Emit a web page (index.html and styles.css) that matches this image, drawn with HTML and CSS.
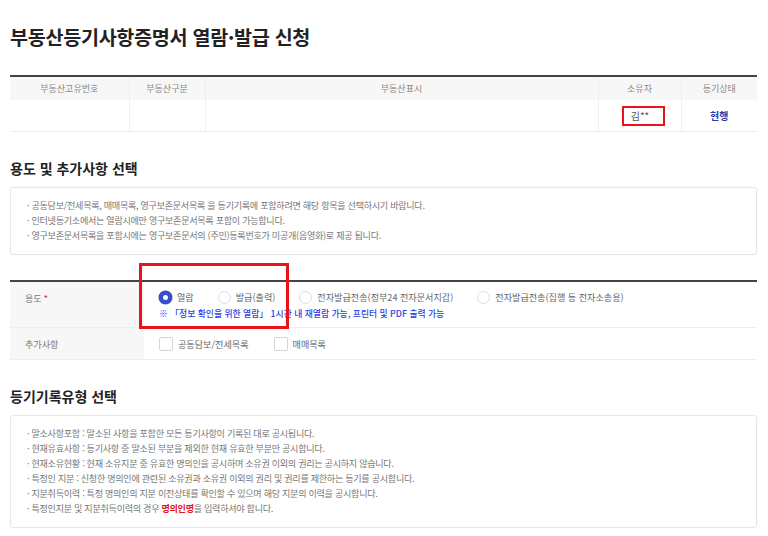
FILE: index.html
```html
<!DOCTYPE html>
<html lang="ko">
<head>
  <meta charset="UTF-8" />
  <title>부동산등기사항증명서 열람·발급 신청</title>
  <link rel="stylesheet" href="styles.css">
</head>
<body>
  <div class="page">
    <h1 class="page-title">부동산등기사항증명서 열람·발급 신청</h1>

    <table class="estate">
      <colgroup>
        <col style="width:119px"><col style="width:76px"><col style="width:393px"><col style="width:83px"><col>
      </colgroup>
      <thead>
        <tr>
          <th>부동산고유번호</th>
          <th>부동산구분</th>
          <th>부동산표시</th>
          <th>소유자</th>
          <th>등기상태</th>
        </tr>
      </thead>
      <tbody>
        <tr>
          <td></td>
          <td></td>
          <td></td>
          <td><span class="mark owner">김**</span></td>
          <td class="state">현행</td>
        </tr>
      </tbody>
    </table>

    <h2 class="sec-title">용도 및 추가사항 선택</h2>
    <div class="notice">
      <p>· 공동담보/전세목록, 매매목록, 영구보존문서목록 을 등기기록에 포함하려면 해당 항목을 선택하시기 바랍니다.</p>
      <p>· 인터넷등기소에서는 열람시에만 영구보존문서목록 포함이 가능합니다.</p>
      <p>· 영구보존문서목록을 포함시에는 영구보존문서의 (주민)등록번호가 미공개(음영화)로 제공 됩니다.</p>
    </div>

    <div class="form-wrap">
      <div class="form-table">
        <div class="row">
          <div class="label">용도 <span class="req">*</span></div>
          <div class="value">
            <div class="options">
              <label class="opt"><span class="radio on"></span>열람</label>
              <label class="opt"><span class="radio"></span>발급(출력)</label>
              <label class="opt"><span class="radio"></span>전자발급전송(정부24 전자문서지갑)</label>
              <label class="opt"><span class="radio"></span>전자발급전송(집행 등 전자소송용)</label>
            </div>
            <p class="hint">※ 「정보 확인을 위한 열람」 1시간 내 재열람 가능, 프린터 및 PDF 출력 가능</p>
          </div>
        </div>
        <div class="row">
          <div class="label">추가사항</div>
          <div class="value">
            <div class="options">
              <label class="opt check"><span class="box"></span>공동담보/전세목록</label>
              <label class="opt check"><span class="box"></span>매매목록</label>
            </div>
          </div>
        </div>
      </div>
      <div class="mark purpose"></div>
    </div>

    <h2 class="sec-title">등기기록유형 선택</h2>
    <div class="notice">
      <p>· 말소사항포함 : 말소된 사항을 포함한 모든 등기사항이 기록된 대로 공시됩니다.</p>
      <p>· 현재유효사항 : 등기사항 중 말소된 부분을 제외한 현재 유효한 부분만 공시합니다.</p>
      <p>· 현재소유현황 : 현재 소유지분 중 유효한 명의인을 공시하며 소유권 이외의 권리는 공시하지 않습니다.</p>
      <p>· 특정인 지분 : 신청한 명의인에 관련된 소유권과 소유권 이외의 권리 및 권리를 제한하는 등기를 공시합니다.</p>
      <p>· 지분취득이력 : 특정 명의인의 지분 이전상태를 확인할 수 있으며 해당 지분의 이력을 공시합니다.</p>
      <p>· 특정인지분 및 지분취득이력의 경우 <strong class="em">명의인명</strong>을 입력하셔야 합니다.</p>
    </div>
  </div>
</body>
</html>
```

FILE: styles.css
```css
body {
  margin: 0;
  background: #fff;
  color: #333;
  font-family: "Noto Sans CJK KR", "Noto Sans", sans-serif;
}
.page {
  width: 747px;
  padding: 0 0 0 10px;
}
.page-title {
  margin: 0;
  padding-top: 24px;
  height: 75px;
  box-sizing: border-box;
  font-size: 19.6px;
  line-height: 26px;
  font-weight: 700;
  color: #222;
  letter-spacing: -0.3px;
}

/* estate table */
.estate {
  width: 100%;
  table-layout: fixed;
  border-collapse: collapse;
  border-top: 2px solid #444;
  font-size: 9px;
}
.estate th {
  height: 23px;
  padding: 0;
  background: #f7f7f7;
  color: #888;
  font-weight: 400;
}
.estate td {
  height: 31px;
  padding: 0;
  text-align: center;
  border-bottom: 1px solid #eee;
  border-left: 1px solid #f0f0f0;
  font-size: 10px;
  color: #555;
}
.estate td:first-child {
  border-left: none;
}
.estate th + th {
  border-left: 1px solid #eee;
}
.estate .state {
  color: #2d3fa6;
  font-weight: 700;
}
.mark {
  border: 2px solid #e8131b;
}
.owner {
  display: inline-block;
  padding: 1px 14px 1px 7px;
  line-height: 14px;
  margin-left: 8px;
}

.sec-title {
  margin: 0;
  padding-top: 27px;
  height: 55px;
  box-sizing: border-box;
  font-size: 14px;
  line-height: 18px;
  font-weight: 700;
  color: #222;
}
.notice {
  border: 1px solid #e6e6e6;
  border-radius: 3px;
  box-shadow: 0 0 2px rgba(0, 0, 0, 0.04);
  padding: 10px 16px 11px;
  font-size: 9.1px;
  line-height: 15px;
  color: #777;
  letter-spacing: -0.3px;
}
.notice p {
  margin: 0;
}
.notice .em {
  color: #e8131b;
}

/* purpose form */
.form-wrap {
  position: relative;
  margin-top: 25px;
  margin-bottom: 0;
}
.form-table {
  border-top: 2px solid #444;
  font-size: 9.1px;
}
.row {
  display: flex;
  border-bottom: 1px solid #eee;
}
.label {
  width: 134px;
  flex: none;
  background: #f7f7f7;
  padding-left: 15px;
  box-sizing: border-box;
  color: #777;
  display: flex;
  align-items: center;
}
.row:first-child .label {
  align-items: flex-start;
  padding-top: 9px;
}
.req {
  color: #e8131b;
  margin-left: 2px;
}
.value {
  flex: 1;
  padding: 7px 15px 5px;
}
.row + .row .value {
  padding: 8px 15px 7px;
}
.options {
  display: flex;
  gap: 24px;
  color: #666;
}
.opt {
  display: flex;
  align-items: center;
  gap: 5px;
  line-height: 16px;
}
.radio {
  width: 11px;
  height: 11px;
  border: 1px solid #ddd;
  border-radius: 50%;
  background: #fff;
}
.radio.on {
  width: 5px;
  height: 5px;
  border: 4px solid #3b4ec7;
  background: #fff;
  box-shadow: 0 0 0 0.5px #3b4ec7;
}
.box {
  width: 12px;
  height: 12px;
  border: 1px solid #d5d5d5;
  border-radius: 2px;
  background: #fff;
}
.check + .check {
  margin-left: 1px;
}
.hint {
  margin: 1px 0 0;
  color: #2a3ee6;
  line-height: 16px;
  font-size: 8.8px;
  font-weight: 500;
}
.purpose {
  position: absolute;
  left: 129px;
  top: -17px;
  width: 144px;
  height: 60px;
  border-width: 3px;
}
```
